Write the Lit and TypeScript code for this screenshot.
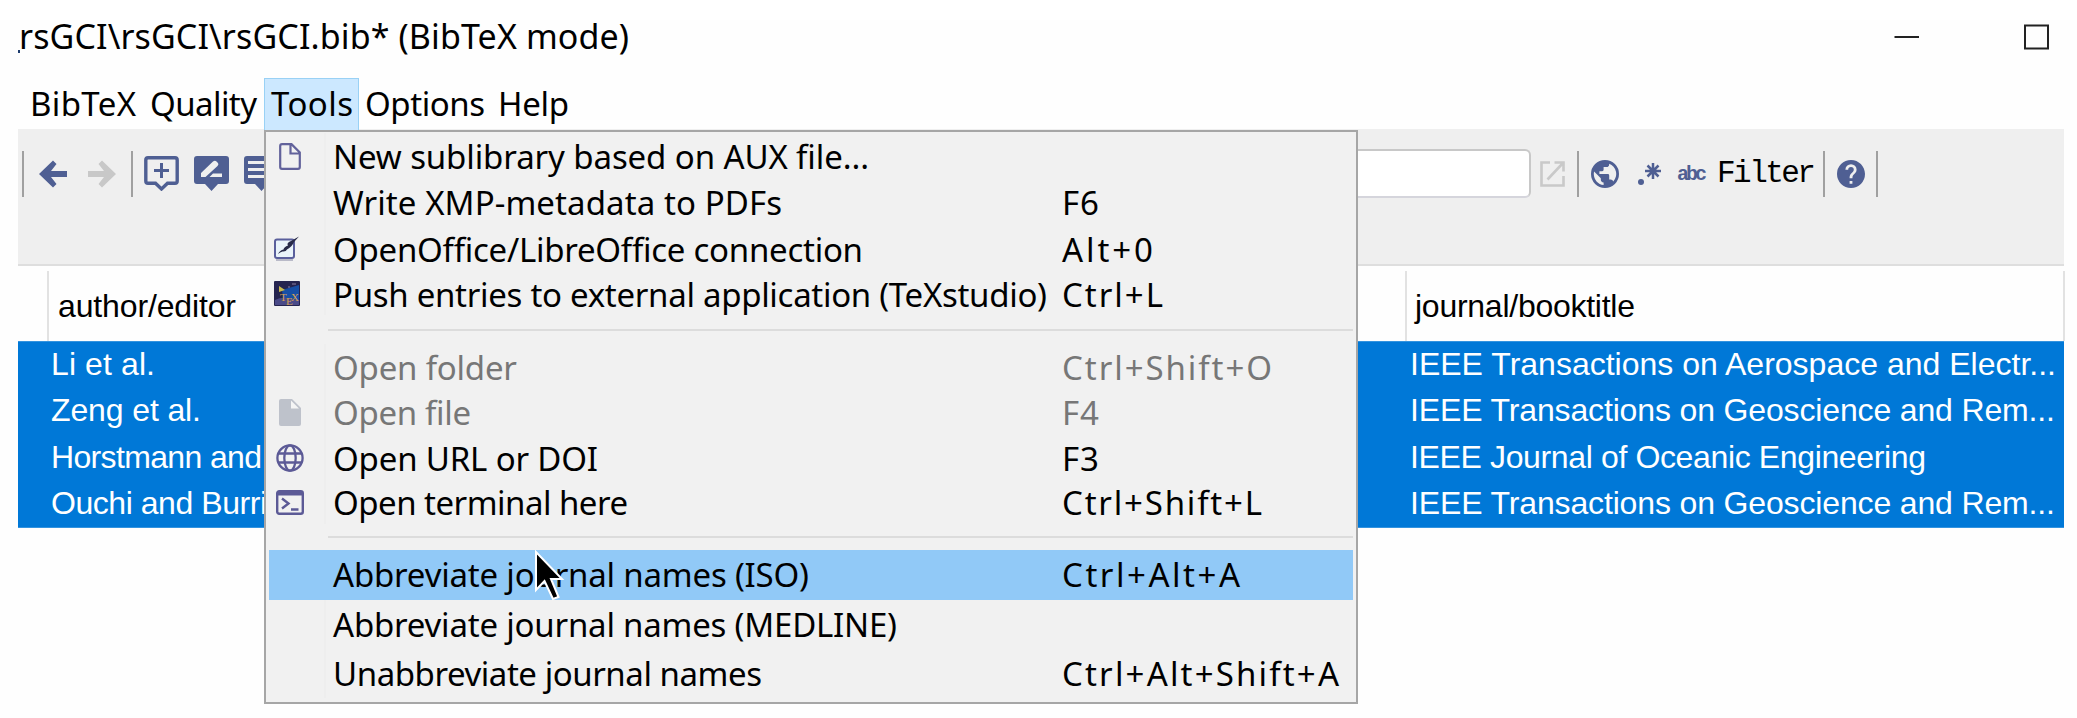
import { LitElement, html, css, svg, nothing } from "lit";
import { customElement, property } from "lit/decorators.js";

/** A run of text whose tracking is adjusted so that it fills a given width. */
@customElement("fit-text")
class FitText extends LitElement {
  @property() text = "";
  @property({ type: Number }) w = 0;
  static styles = css`
    :host { display: block; white-space: pre; }
    .run { display: inline-block; font-kerning: normal; font-variant-ligatures: none; }
  `;
  firstUpdated() {
    const run = this.renderRoot.querySelector(".run") as HTMLElement;
    const natural = run.getBoundingClientRect().width;
    if (this.w && this.text.length > 1) {
      run.style.letterSpacing = (this.w - natural) / (this.text.length - 1) + "px";
    }
  }
  render() {
    return html`<span class="run">${this.text}</span>`;
  }
}

const INK = "#4f5f93";
const icon = (w: number, h: number, vb: string, body: unknown) =>
  html`<svg width=${w} height=${h} viewBox=${vb} fill="none">${body}</svg>`;

const icons = {
  back: icon(28, 28, "0 0 28 28", svg`<path d="M0 14 14 0.5 17.5 4 12 11H28V17H12L17.5 24 14 27.5Z" fill=${INK}/>`),
  forward: icon(28, 28, "0 0 28 28", svg`<path d="M28 14 14 0.5 10.5 4 16 11H0V17H16L10.5 24 14 27.5Z" fill="#c8c8c8"/>`),
  add: icon(35, 35, "0 0 35 35", svg`<path d="M4 1.8H31Q33.2 1.8 33.2 4V25Q33.2 27.3 31 27.3H23.5L17.5 33 11.5 27.3H4Q1.8 27.3 1.8 25V4Q1.8 1.8 4 1.8Z" stroke=${INK} stroke-width="3.4"/><path d="M17.5 7V22M10 14.5H25" stroke=${INK} stroke-width="3"/>`),
  edit: icon(35, 35, "0 0 35 35", svg`<path d="M3 0H32Q35 0 35 3V25Q35 28 32 28H24L17.5 35 11 28H3Q0 28 0 25V3Q0 0 3 0Z" fill=${INK}/><path d="M7 21V17L19 5.5Q21 4 22.500 5.500L24 7Q25 8.500 23.500 10L11.500 21ZM15.500 21 19 17.500H28V21Z" fill="#efefef"/>`),
  list: icon(35, 35, "0 0 35 35", svg`<path d="M3 0H32Q35 0 35 3V25Q35 28 32 28H24L17.5 35 11 28H3Q0 28 0 25V3Q0 0 3 0Z" fill=${INK}/><path d="M4 6.500H31M4 13.500H31M4 20.500H31" stroke="#efefef" stroke-width="3"/>`),
  external: icon(25, 26, "0 0 25 26", svg`<path d="M10 1.500H1.500V24.500H23.500V15M14.500 1.500H23.500V10.500M23 2 7.500 18.500" stroke="#c9c9c9" stroke-width="2.600"/>`),
  world: icon(28, 28, "2 2 20 20", svg`<path fill=${INK} d="M17.900 17.390c-.260-.800-1.010-1.390-1.900-1.390h-1v-3a1 1 0 0 0-1-1H8v-2h2a1 1 0 0 0 1-1V7h2a2 2 0 0 0 2-2v-.410a7.984 7.984 0 0 1 2.900 12.800M11 19.930c-3.950-.490-7-3.850-7-7.930 0-.620.080-1.220.210-1.790L9 15v1a2 2 0 0 0 2 2m1-16A10 10 0 0 0 2 12a10 10 0 0 0 10 10 10 10 0 0 0 10-10A10 10 0 0 0 12 2Z"/>`),
  regex: icon(24, 24, "0 0 24 24", svg`<circle cx="3" cy="20" r="3" fill=${INK}/><path d="M15 1V17M7 9H23M9.500 3.500 20.500 14.500M20.500 3.500 9.500 14.500" stroke=${INK} stroke-width="2.500"/>`),
  help: icon(28, 28, "2 2 20 20", svg`<path fill=${INK} d="M15.070 11.250l-.900.920C13.450 12.890 13 13.500 13 15h-2v-.500c0-1.110.450-2.110 1.170-2.830l1.240-1.260c.370-.360.590-.860.590-1.410a2 2 0 0 0-2-2 2 2 0 0 0-2 2H8a4 4 0 0 1 4-4 4 4 0 0 1 4 4 3.200 3.200 0 0 1-.930 2.250M13 19h-2v-2h2M12 2A10 10 0 0 0 2 12a10 10 0 0 0 10 10 10 10 0 0 0 10-10c0-5.530-4.500-10-10-10Z"/>`),
  doc: icon(22, 27, "0 0 22 27", svg`<path d="M1.200 3Q1.200 1.200 3 1.200H12.500L20.800 9.500V24Q20.800 25.800 19 25.800H3Q1.200 25.800 1.200 24ZM11.500 1.500V10.500H20.500" stroke="#62629b" stroke-width="2.200"/>`),
  office: icon(26, 25, "0 0 26 25", svg`<rect x="1" y="3.500" width="19" height="18.500" rx="2" fill="#e9f3fa" stroke="#5a5f9c" stroke-width="2"/><path d="M2 24H19" stroke="#b9bac8" stroke-width="2"/><path d="M4 18Q6 14 9.500 13.500Q10 11 14 9.500Q12 7 17 5L25 0.500 20 6Q18 11 13 13.500Q12 16 8.500 15.500Q6 16 4 18Z" fill="#272a48"/>`),
  tex: html`<svg width="26" height="25" viewBox="0 0 26 25"><rect width="26" height="25" rx="1" fill="#25244f"/><path d="M8 9 25 4V24H10Z" fill="#174fa6"/><path d="M1 19Q10 14 25 20V24H1Z" fill="#4a4a88"/><path d="M5 5 11 9 5 11Z" fill="#c9b94c"/><path d="M18 3H22M14 6H16" stroke="#8c7fa5"/><text class="tex" x="6" y="20">T</text><text class="tex" x="12" y="24">E</text><text class="tex" x="17" y="20">X</text></svg>`,
  file: icon(22, 27, "0 0 22 27", svg`<path d="M2 0H13L22 9V25Q22 27 20 27H2Q0 27 0 25V2Q0 0 2 0Z" fill="#bec2cb"/><path d="M12 1.500V9.500H20Z" fill="#f5f5f5"/>`),
  globe: icon(28, 28, "0 0 28 28", svg`<g stroke="#5c5a96" stroke-width="2.300"><circle cx="14" cy="14" r="12.600"/><ellipse cx="14" cy="14" rx="5.700" ry="12.600"/><path d="M2.500 9.500H25.500M2.500 18.500H25.500"/></g>`),
  terminal: icon(28, 25, "0 0 28 25", svg`<rect x="1.200" y="1.200" width="25.600" height="22.600" rx="2" stroke="#5c5a96" stroke-width="2.400"/><path d="M1 1H27V5.500H1Z" fill="#5c5a96"/><path d="M6 8.500 12.500 13.500 6 18.500M15 19.500H22.500" stroke="#5c5a96" stroke-width="2.400"/>`),
};

type Item = { h: number; label?: string; w?: number; key?: string; kw?: number; icon?: unknown; dx?: number; off?: boolean; on?: boolean };
const menu: Item[] = [
  { h: 46, label: "New sublibrary based on AUX file...", w: 536, icon: icons.doc, dx: 13 },
  { h: 46, label: "Write XMP-metadata to PDFs", w: 449, key: "F6", kw: 37 },
  { h: 47, label: "OpenOffice/LibreOffice connection", w: 530, key: "Alt+0", kw: 91, icon: icons.office, dx: 8 },
  { h: 43, label: "Push entries to external application (TeXstudio)", w: 714, key: "Ctrl+L", kw: 101, icon: icons.tex, dx: 8 },
  { h: 29 },
  { h: 45, label: "Open folder", w: 184, key: "Ctrl+Shift+O", kw: 210, off: true },
  { h: 46, label: "Open file", w: 138, key: "F4", kw: 37, icon: icons.file, dx: 13, off: true },
  { h: 45, label: "Open URL or DOI", w: 265, key: "F3", kw: 37, icon: icons.globe, dx: 10 },
  { h: 44, label: "Open terminal here", w: 295, key: "Ctrl+Shift+L", kw: 200, icon: icons.terminal, dx: 10 },
  { h: 26 },
  { h: 50, label: "Abbreviate journal names (ISO)", w: 476, key: "Ctrl+Alt+A", kw: 178, on: true },
  { h: 48, label: "Abbreviate journal names (MEDLINE)", w: 564 },
  { h: 50, label: "Unabbreviate journal names", w: 429, key: "Ctrl+Alt+Shift+A", kw: 277 },
];

const rows: [string, number, string, number][] = [
  ["Li et al.", 104, "IEEE Transactions on Aerospace and Electr...", 646],
  ["Zeng et al.", 150, "IEEE Transactions on Geoscience and Rem...", 645],
  ["Horstmann and", 211, "IEEE Journal of Oceanic Engineering", 516],
  ["Ouchi and Burri", 216, "IEEE Transactions on Geoscience and Rem...", 645],
];

@customElement("app-root")
class AppRoot extends LitElement {
  static styles = css`
    :host { display: block; position: relative; width: 2077px; height: 718px; overflow: hidden; background: #fff; color: #000; font: 33px/46px "Noto Sans", sans-serif; }
    * { box-sizing: border-box; }
    svg { display: block; flex: none; }
    .window { padding: 12px 13px 0 18px; height: 718px; background: linear-gradient(#fff 20px, #fefefe 20px); display: flex; flex-direction: column; }
    .title { height: 66px; flex: none; display: flex; align-items: flex-start; font-size: 34px; line-height: 49px; }
    .title .name { flex: 1; }
    .sliver { width: 2px; height: 3px; background: #1d3c6e; margin-top: 38px; margin-right: -1px; }
    .buttons { margin-top: 12px; }
    .menubar { height: 51px; flex: none; display: flex; line-height: 51px; padding-left: 12px; position: relative; z-index: 3; }
    .menubar .cell { flex: none; }
    .tools { background: #cce8ff; border: 1.500px solid #99d1f5; border-bottom: 0; height: 52px; line-height: 49px; padding-left: 6px; }
    .toolbar { flex: none; height: 137px; background: #efefef; border-bottom: 2px solid #dedede; display: flex; align-items: flex-start; padding-top: 19px; }
    .group { display: flex; align-items: center; height: 51px; }
    .bar { width: 2px; height: 46px; background: #a0a0a0; flex: none; }
    .search { width: 232px; height: 49px; margin-top: 1px; border: 2px solid #c8c8c8; border-bottom-color: #d5d5dc; border-radius: 6px; background: #fff; }
    .abc { font: bold 20px/28px "Liberation Mono", monospace; color: #4f5f93; padding-top: 2px; }
    .filter { font: 31px/42px "Liberation Mono", monospace; padding-top: 1px; }
    .head { flex: none; height: 75px; display: grid; grid-template-columns: 29px 1358px 658px 2px; padding: 5px 0 1px; font: 32px/70px "Liberation Sans", sans-serif; }
    .hcell { border-left: 2px solid #e2e2e2; padding-left: 8px; }
    .hcell.first { padding-left: 9px; }
    .body { flex: none; height: 187px; background: #0078d7; border: 1px solid #3393df; border-width: 1px 0; color: #fff; font: 32px/46.500px "Liberation Sans", sans-serif; display: grid; grid-template-rows: repeat(4, 46.400px); }
    .row { display: grid; grid-template-columns: 1359px 660px; padding-left: 33px; line-height: 45px; }
    .popup { position: absolute; left: 264px; top: 130px; width: 1094px; height: 574px; background: #f1f1f1; border: 2px solid #a6a6a6; padding: 1px 3px 0; z-index: 4; }
    .item { display: grid; grid-template-columns: 64px 729px 1fr; align-items: center; line-height: 48px; }
    .ic { height: 100%; border-right: 2px solid #eeeeee; margin-right: 7px; display: flex; align-items: center; }
    .item fit-text { padding-top: 1px; margin-bottom: -1px; }
    .off { color: #777; }
    .on { background: #91c9f7; padding-bottom: 2px; }
    .on .ic { border-color: #91c9f7; }
    .line { height: 2px; background: #dcdcdc; margin-left: 59px; }
    .gap { display: flex; flex-direction: column; justify-content: center; }
    .tex { font: 11px "Liberation Serif", serif; fill: #d3a056; }
    .cursor { position: absolute; left: 534px; top: 550px; z-index: 5; }
  `;

  private item(i: Item) {
    if (!i.label) return html`<div class="gap" style="height:${i.h}px"><div class="line"></div></div>`;
    return html`<div class="item ${i.off ? "off" : ""} ${i.on ? "on" : ""}" style="height:${i.h}px;grid-template-rows:${i.on ? i.h - 2 : i.h}px">
      <div class="ic" style="padding-left:${(i.dx ?? 0) - 3}px">${i.icon ?? nothing}</div>
      <fit-text .text=${i.label} .w=${i.w!}></fit-text>
      ${i.key ? html`<fit-text .text=${i.key} .w=${i.kw!}></fit-text>` : nothing}
    </div>`;
  }

  render() {
    const tab = (t: string, w: number, cell: number, cls = "") =>
      html`<div class="cell ${cls}" style="width:${cell}px"><fit-text .text=${t} .w=${w}></fit-text></div>`;
    const at = (gap: number, body: unknown) => html`<div style="margin-left:${gap}px">${body}</div>`;
    return html`
      <div class="window">
        <div class="title">
          <div class="sliver"></div>
          <fit-text class="name" .text=${"rsGCI\\rsGCI\\rsGCI.bib* (BibTeX mode)"} .w=${610}></fit-text>
          <svg class="buttons" width="172" height="34" viewBox="0 0 172 34" fill="none" stroke="#222" stroke-width="2"><path d="M2.500 13H27"/><rect x="133" y="1.500" width="23" height="23"/></svg>
        </div>
        <div class="menubar">
          ${tab("BibTeX", 106, 120)}${tab("Quality", 107, 114)}${tab("Tools", 82, 95, "tools")}
          <div style="width:6px"></div>${tab("Options", 120, 133)}${tab("Help", 71, 90)}
        </div>
        <div class="toolbar">
          <div class="group">
            ${at(4, html`<div class="bar"></div>`)}${at(15, icons.back)}${at(21, icons.forward)}
            ${at(15, html`<div class="bar"></div>`)}${at(11, icons.add)}${at(15, icons.edit)}${at(15, icons.list)}
          </div>
          ${at(1020, html`<div class="search"></div>`)}
          <div class="group">
            ${at(9, icons.external)}${at(12, html`<div class="bar"></div>`)}${at(12, icons.world)}
            ${at(19, icons.regex)}${at(15, html`<fit-text class="abc" .text=${"abc"} .w=${30}></fit-text>`)}
            ${at(13, html`<fit-text class="filter" .text=${"Filter"} .w=${99}></fit-text>`)}
            ${at(10, html`<div class="bar"></div>`)}${at(12, icons.help)}${at(11, html`<div class="bar"></div>`)}
          </div>
        </div>
        <div class="head">
          <div></div>
          <div class="hcell first"><fit-text .text=${"author/editor"} .w=${178}></fit-text></div>
          <div class="hcell"><fit-text .text=${"journal/booktitle"} .w=${220}></fit-text></div>
          <div class="hcell"></div>
        </div>
        <div class="body">
          ${rows.map(([a, aw, j, jw]) => html`<div class="row"><fit-text .text=${a} .w=${aw}></fit-text><fit-text .text=${j} .w=${jw}></fit-text></div>`)}
        </div>
      </div>
      <div class="popup">${menu.map((i) => this.item(i))}</div>
      <svg class="cursor" width="32" height="52" viewBox="0 0 32 52"><path d="M2 2V40L10.500 31 19 49 24.500 47 17 29H28Z" fill="#000" stroke="#fff" stroke-width="2"/></svg>
    `;
  }
}
